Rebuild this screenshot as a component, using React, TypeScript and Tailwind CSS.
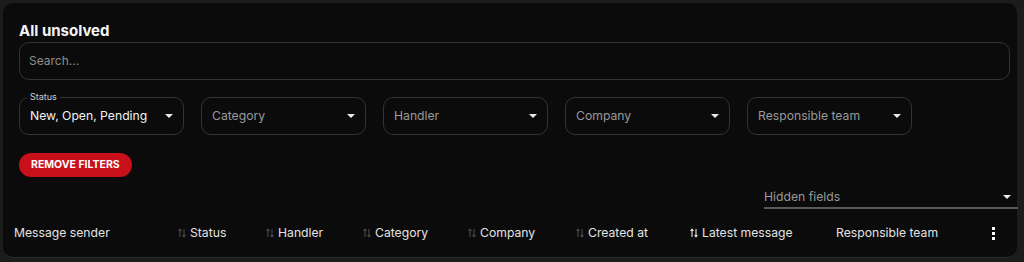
import React from "react";

const Caret = ({ className = "" }: { className?: string }) => (
  <svg width="8" height="4" viewBox="0 0 8 4" className={className}>
    <path d="M0 0 L8 0 L4 4 Z" fill="currentColor" />
  </svg>
);

const SortIcon = ({ active = false }: { active?: boolean }) => (
  <svg width="8" height="10" viewBox="0 0 8 10" className={active ? "text-[#e6e6e6]" : "text-[#4a4a4a]"}>
    <path d="M2 9 V1.5 M0.5 3 L2 1.2 L3.5 3" stroke="currentColor" strokeWidth="1.1" fill="none" />
    <path d="M6 1 V8.5 M4.5 7 L6 8.8 L7.5 7" stroke="currentColor" strokeWidth="1.1" fill="none" />
  </svg>
);

function Select({ label, value, placeholder }: { label?: string; value?: string; placeholder: string }) {
  return (
    <div className="relative w-[165px] h-[38px] rounded-[10px] border border-[#333] flex items-center justify-between pl-[10px] pr-[10px]">
      {label && (
        <span className="absolute -top-[7px] left-[7px] px-[3px] bg-[#0b0b0b] text-[9px] leading-[12px] text-[#cfcfcf]">
          {label}
        </span>
      )}
      <span className={`text-[12.2px] ${value ? "text-[#f2f2f2]" : "text-[#9a9a9a]"}`}>{value ?? placeholder}</span>
      <Caret className="text-[#eaeaea]" />
    </div>
  );
}

const cols: { name: string; w: string; sort?: boolean; active?: boolean }[] = [
  { name: "Status", w: "w-[88px]", sort: true },
  { name: "Handler", w: "w-[97px]", sort: true },
  { name: "Category", w: "w-[105px]", sort: true },
  { name: "Company", w: "w-[108px]", sort: true },
  { name: "Created at", w: "w-[114px]", sort: true },
  { name: "Latest message", w: "w-[146px]", sort: true, active: true },
  { name: "Responsible team", w: "w-[157px]" },
];

export default function App() {
  return (
    <div
      className="w-[1024px] h-[262px] bg-[#1c1c1c] pt-[3px] pl-[3px] overflow-hidden"
      style={{ fontFamily: "Inter, 'Noto Sans', sans-serif" }}
    >
      <div className="w-[1014px] h-[255px] bg-[#0b0b0b] rounded-[10px] border-b border-[#2a2a2a] flex flex-col">
        <div className="px-[16px] pt-[18px]">
          <h1 className="text-[15px] font-bold text-[#f4f4f4] leading-[20px]">All unsolved</h1>
          <div className="mt-[1px] h-[38px] w-[991px] rounded-[10px] border border-[#333] flex items-center pl-[9px] text-[12px] text-[#8e8e8e]">
            Search...
          </div>
          <div className="mt-[17px] flex gap-[17px]">
            <Select label="Status" value="New, Open, Pending" placeholder="" />
            <Select placeholder="Category" />
            <Select placeholder="Handler" />
            <Select placeholder="Company" />
            <Select placeholder="Responsible team" />
          </div>
          <button className="mt-[18px] h-[24px] px-[12px] rounded-full bg-[#c8101a] text-white text-[10.5px] font-bold">
            REMOVE FILTERS
          </button>
        </div>
        <div className="flex justify-end mt-[10px]">
          <div className="w-[254px] mr-[-1px] h-[22px] border-b-2 border-[#5a5a5a] flex items-center justify-between pr-[7px] text-[12.2px] text-[#9a9a9a]">
            <span>Hidden fields</span>
            <Caret className="text-[#eaeaea]" />
          </div>
        </div>
        <div className="flex items-center pl-[11px] mt-[15px] text-[12.2px] text-[#e3e3e3]">
          <div className="w-[164px]">Message sender</div>
          {cols.map((c) => (
            <div key={c.name} className={`${c.w} flex items-center gap-[4px]`}>
              {c.sort && <SortIcon active={c.active} />}
              <span>{c.name}</span>
            </div>
          ))}
          <div className="flex flex-col gap-[2px] ml-[-1px]">
            <span className="w-[3px] h-[3px] bg-white" />
            <span className="w-[3px] h-[3px] bg-white" />
            <span className="w-[3px] h-[3px] bg-white" />
          </div>
        </div>
      </div>
    </div>
  );
}
